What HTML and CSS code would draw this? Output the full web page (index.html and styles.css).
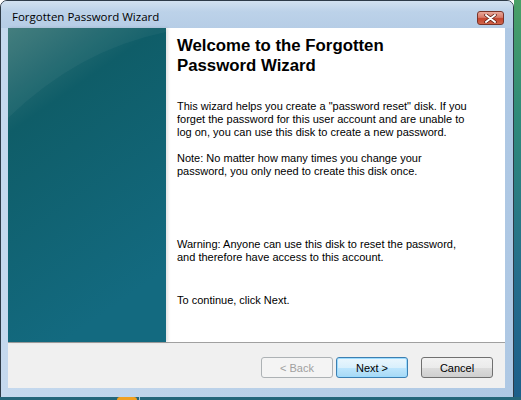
FILE: index.html
```html
<!DOCTYPE html>
<html>
  <head>
    <title>Forgotten Password Wizard</title>
    <link rel="stylesheet" href="styles.css">
  </head>
  <body>
    <div class="screen">
      <div class="top">
        <div class="window">
          <div class="titlebar">
            <span class="title">Forgotten Password Wizard</span>
            <span class="close">
              <svg width="13" height="9" viewBox="0 0 13 9">
                <path d="M2 1 L11 8 M11 1 L2 8" stroke="#5a1a10" stroke-width="3.4" stroke-linecap="round"/>
                <path d="M2 1 L11 8 M11 1 L2 8" stroke="#fff" stroke-width="2" stroke-linecap="round"/>
              </svg>
            </span>
          </div>

          <div class="client">
            <div class="main">
              <div class="side">
                <svg width="158" height="314" viewBox="0 0 158 314" preserveAspectRatio="none">
                  <defs>
                    <linearGradient id="teal" x1="0" y1="0" x2="0.35" y2="1">
                      <stop offset="0" stop-color="#3d7979"/>
                      <stop offset="0.3" stop-color="#0f5d68"/>
                      <stop offset="1" stop-color="#136a80"/>
                    </linearGradient>
                  </defs>
                  <rect width="158" height="314" fill="url(#teal)"/>
                  <path d="M0 0 H158 V4 Q70 22 0 90 Z" fill="#ffffff" opacity="0.04"/>
                </svg>
              </div>

              <div class="content">
                <h1>Welcome to the Forgotten Password Wizard</h1>
                <p class="intro">This wizard helps you create a "password reset" disk. If you forget the password for this user account and are unable to log on, you can use this disk to create a new password.</p>
                <p class="note">Note: No matter how many times you change your password, you only need to create this disk once.</p>
                <p class="warning">Warning: Anyone can use this disk to reset the password, and therefore have access to this account.</p>
                <p class="next">To continue, click Next.</p>
              </div>
            </div>

            <div class="buttons">
              <button class="btn disabled">&lt; Back</button>
              <button class="btn default">Next &gt;</button>
              <button class="btn cancel">Cancel</button>
            </div>
          </div>
        </div>
        <div class="desk"></div>
      </div>
      <div class="taskbar">
        <span class="orb"></span>
        <span class="tick"></span>
      </div>
    </div>
  </body>
</html>
```

FILE: styles.css
```css
body {
  margin: 0;
  font-family: "Liberation Sans", Arial, sans-serif;
}

.screen {
  width: 521px;
  height: 400px;
  display: flex;
  flex-direction: column;
  overflow: hidden;
}

.top {
  display: flex;
  height: 397px;
}

.desk {
  flex-grow: 1;
  background: linear-gradient(to bottom, #4aa066 0%, #2f8a7a 30%, #256d8c 70%, #1d5f8a 100%);
}

.taskbar {
  height: 3px;
  background: #24667a;
  position: relative;
}
.orb {
  position: absolute;
  left: 117px;
  top: 0;
  width: 20px;
  height: 3px;
  border-radius: 8px 8px 0 0;
  background: #f0a020;
}
.tick {
  position: absolute;
  left: 139px;
  top: 0;
  width: 1px;
  height: 3px;
  background: #a8c8d8;
}

.window {
  height: 395px;
  border: 1px solid #2e3b48;
  border-radius: 7px 7px 0 0;
  background: linear-gradient(to right, #c5d9ee 0%, #b9d0e8 50%, #aec8e4 100%);
  padding: 0 7px 8px 7px;
  box-sizing: content-box;
  width: 498px;
  display: flex;
  flex-direction: column;
}

.titlebar {
  height: 27px;
  display: flex;
  align-items: flex-start;
  margin: 0 -7px;
  padding: 0 9px 0 11px;
  border-radius: 6px 6px 0 0;
  background: linear-gradient(to bottom, #d2e1f0 0%, #bcd2e9 40%, #b6cde6 100%);
}

.title {
  font-family: "Open Sans", "Noto Sans", sans-serif;
  font-size: 11.5px;
  line-height: 20px;
  padding-top: 6px;
  color: #000;
}

.close {
  margin-left: auto;
  margin-top: 10px;
  width: 27px;
  height: 14px;
  box-sizing: border-box;
  border: 1px solid #7a3428;
  border-radius: 3px;
  background: linear-gradient(to bottom, #e9a89a 0%, #d77a68 45%, #c4432c 55%, #d0664c 100%);
  display: flex;
  align-items: center;
  justify-content: center;
}

.client {
  width: 497px;
  height: 360px;
  display: flex;
  flex-direction: column;
  background: #f0f0f0;
}

.main {
  display: flex;
  height: 314px;
  background: #fff;
  border-bottom: 1px solid #a0a0a0;
}

.side {
  width: 158px;
  height: 314px;
  flex-shrink: 0;
  box-shadow: 2px 0 3px rgba(0, 0, 0, 0.12);
}
.side svg {
  display: block;
}

.content {
  padding: 8px 11px;
}

h1 {
  margin: 0;
  width: 230px;
  font-size: 16.8px;
  line-height: 20px;
  font-weight: bold;
  color: #000;
}

.content p {
  margin: 0;
  font-size: 11px;
  line-height: 13px;
  color: #000;
  width: 292px;
}

.intro {
  margin-top: 24px !important;
}
.note {
  margin-top: 13px !important;
}
.warning {
  margin-top: 60px !important;
}
.next {
  margin-top: 30px !important;
}

.buttons {
  display: flex;
  justify-content: flex-end;
  padding: 14px 12px 0 0;
}

.btn {
  width: 72px;
  height: 21px;
  padding: 0;
  margin-left: 3px;
  font-family: "Liberation Sans", Arial, sans-serif;
  font-size: 11px;
  border-radius: 3px;
  border: 1px solid #707070;
  background: linear-gradient(to bottom, #f2f2f2 0%, #ebebeb 50%, #dddddd 51%, #cfcfcf 100%);
  color: #000;
}

.btn.disabled {
  border-color: #adb2b5;
  background: #f4f4f4;
  color: #a0a0a0;
}

.btn.default {
  border-color: #3c7fb1;
  background: linear-gradient(to bottom, #eaf6fd 0%, #d9f0fc 50%, #bee6fd 51%, #a7d9f5 100%);
  box-shadow: inset 0 0 0 1px #9ddcff;
}

.btn.cancel {
  margin-left: 13px;
}
```
